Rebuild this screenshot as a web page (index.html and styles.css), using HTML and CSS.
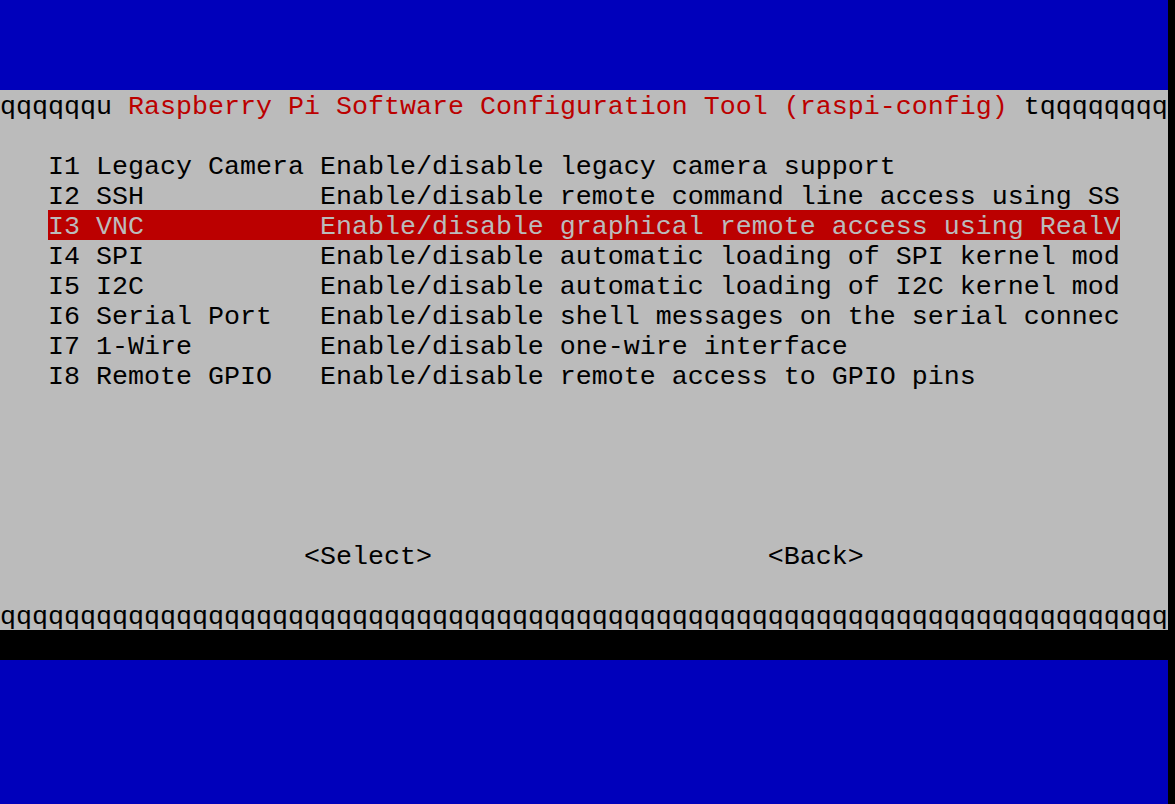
FILE: index.html
```html
<!DOCTYPE html>
<html lang="en">

<head>
    <meta charset="UTF-8">
    <meta name="viewport" content="width=device-width, initial-scale=1.0">
    <title>raspi-config</title>
    <link rel="stylesheet" href="styles.css">
</head>

<body>
    <div class="screen">
        <div class="dialog">
            <div class="line title-line">qqqqqqu <span class="title">Raspberry Pi Software Configuration Tool (raspi-config)</span> tqqqqqqqq</div>

            <ul class="menu">
                <li class="item"><span class="tag">I1 Legacy Camera</span><span class="desc">Enable/disable legacy camera support</span></li>
                <li class="item"><span class="tag">I2 SSH</span><span class="desc">Enable/disable remote command line access using SS</span></li>
                <li class="item selected"><span class="tag">I3 VNC</span><span class="desc">Enable/disable graphical remote access using RealV</span></li>
                <li class="item"><span class="tag">I4 SPI</span><span class="desc">Enable/disable automatic loading of SPI kernel mod</span></li>
                <li class="item"><span class="tag">I5 I2C</span><span class="desc">Enable/disable automatic loading of I2C kernel mod</span></li>
                <li class="item"><span class="tag">I6 Serial Port</span><span class="desc">Enable/disable shell messages on the serial connec</span></li>
                <li class="item"><span class="tag">I7 1-Wire</span><span class="desc">Enable/disable one-wire interface</span></li>
                <li class="item"><span class="tag">I8 Remote GPIO</span><span class="desc">Enable/disable remote access to GPIO pins</span></li>
            </ul>

            <div class="buttons">
                <span class="button">&lt;Select&gt;</span>
                <span class="button">&lt;Back&gt;</span>
            </div>

            <!-- 73 columns wide, same as the terminal -->
            <div class="line border-line">qqqqqqqqqqqqqqqqqqqqqqqqqqqqqqqqqqqqqqqqqqqqqqqqqqqqqqqqqqqqqqqqqqqqqqqqq</div>
        </div>
        <div class="shadow"></div>
    </div>
</body>

</html>
```

FILE: styles.css
```css
html,
body {
    margin: 0;
    height: 100%;
}

body {
    background-color: #000;
    font-family: 'Liberation Mono', 'DejaVu Sans Mono', monospace;
    font-size: 26.6667px;
    /* taller than the 30px cell so glyphs sit a little lower, like the terminal */
    line-height: 34px;
    color: #000;
    overflow: hidden;
}

.screen {
    width: 1168px;
    height: 100%;
    background-color: #0000bb;
    padding-top: 90px;
    box-sizing: border-box;
}

.dialog {
    background-color: #bbbbbb;
    display: flex;
    flex-direction: column;
}

.line {
    height: 30px;
    white-space: pre;
}

.title {
    color: #bb0000;
}

.menu {
    list-style: none;
    margin: 30px 0 0 3ch;
    padding: 0;
    width: 67ch;
}

.item {
    display: flex;
    height: 30px;
    white-space: pre;
}

.item.selected {
    background-color: #bb0000;
    color: #bbbbbb;
}

.tag {
    width: 17ch;
    flex-shrink: 0;
}

.buttons {
    display: flex;
    gap: 21ch;
    height: 30px;
    margin-top: 150px;
    padding-left: 19ch;
    white-space: pre;
}

.border-line {
    margin-top: 30px;
}

.shadow {
    height: 30px;
    background-color: #000;
}
```
